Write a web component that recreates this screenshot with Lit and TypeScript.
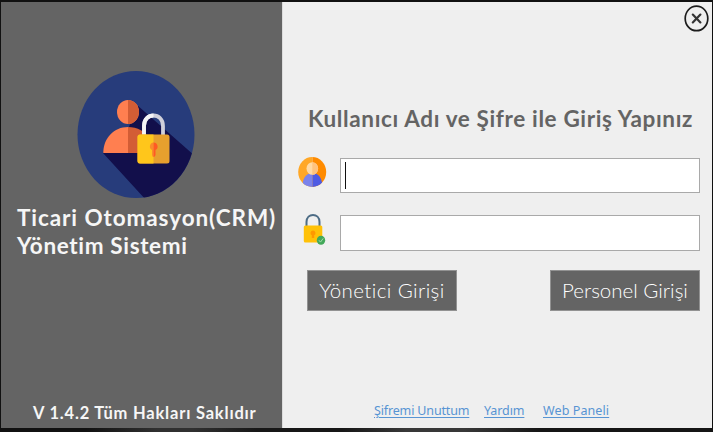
import { LitElement, html, css } from "lit";
import { customElement } from "lit/decorators.js";

@customElement("app-root")
export class AppRoot extends LitElement {
  static styles = css`
    :host {
      display: block;
      box-sizing: border-box;
      width: 713px;
      height: 432px;
      padding: 2px 1px 4px;
      overflow: hidden;
      background: linear-gradient(90deg, #111 0 12%, #303030 22% 27%, #171717 36% 48%, #383838 57% 65%, #151515 76%) 0 428px / 713px 4px no-repeat, #111;
      font-family: Lato, "Century Gothic", sans-serif;
    }
    * { box-sizing: border-box; }
    svg { display: block; overflow: visible; }
    .window { display: flex; width: 711px; height: 426px; background: #efefef; }
    .side {
      width: 281px;
      display: flex;
      flex-direction: column;
      background: #646464;
      color: #f6f6f6;
      font-weight: 700;
      white-space: nowrap;
    }
    .logo { margin: 68px 0 0 76px; }
    .title { margin: 4px 0 0 16px; font-size: 22.5px; line-height: 28px; }
    .t1 { letter-spacing: 0.92px; }
    .t2 { letter-spacing: 0.65px; }
    .version { margin: auto 0 5px 32px; font-size: 16.5px; line-height: 20px; letter-spacing: 0.8px; }
    .main { width: 430px; display: flex; flex-direction: column; border-left: 1px solid #dcdcdc; white-space: nowrap; }
    .close { margin: 3px 1px 0 auto; }
    .heading {
      margin: 73px 0 0 25px;
      font-size: 22.5px;
      line-height: 28px;
      font-weight: 700;
      color: #646464;
      letter-spacing: 0.64px;
    }
    .row { display: flex; align-items: center; padding-left: 15px; gap: 13px; }
    .user { margin-top: 25px; height: 35px; }
    .pass { margin-top: 22px; height: 36px; }
    .icon { width: 29px; }
    .user .icon { margin-top: -5px; }
    .field { width: 360px; height: 100%; background: #fff; border: 1px solid #a9a9a9; padding: 3px 4px; }
    .caret { width: 1px; height: 27px; background: #111; }
    .buttons { display: flex; justify-content: space-between; margin: 19px 12px 0 24px; }
    .button {
      width: 150px;
      height: 41px;
      border: 1px solid #929292;
      background: #646464;
      color: #fff;
      font-size: 20.5px;
      font-weight: 300;
      line-height: 39px;
      text-align: center;
    }
    .b1 { letter-spacing: 0.4px; }
    .b2 { letter-spacing: 0; }
    .links {
      display: flex;
      margin: auto 0 8px 91px;
      font-family: "Noto Sans", sans-serif;
      font-size: 12.5px;
      line-height: 18px;
      color: #5794d3;
    }
    .link { text-decoration: underline; text-underline-offset: 2px; }
    .l1 { width: 110px; letter-spacing: -0.15px; }
    .l2 { width: 59px; letter-spacing: -0.1px; }
    .l3 { letter-spacing: 0.1px; }
  `;

  render() {
    return html`
      <div class="window">
        <div class="side">
          <svg class="logo" width="119" height="130" viewBox="0 0 119 130">
            <defs><clipPath id="disc"><ellipse cx="59" cy="64.5" rx="58.5" ry="63.5" /></clipPath></defs>
            <g clip-path="url(#disc)">
              <rect width="119" height="130" fill="#273c7b" />
              <path d="M60 35 119 87V130H69L26 83 52 57Z" fill="#120f4b" />
            </g>
            <ellipse cx="51" cy="42" rx="11" ry="12" fill="#ff7f50" />
            <path d="M51 30a11 12 0 0 1 0 24Z" fill="#d35d35" />
            <path d="M26.300 83C26.300 68 37 57 51 57V83Z" fill="#ff7f50" />
            <path d="M51 57C60 57 69 61 73 70V83H51Z" fill="#d35d35" />
            <path d="M67 66V56C67 42 86 42 86 56V66" fill="none" stroke="#d0d0da" stroke-width="3.800" />
            <path d="M67 66V56C67 49 71.500 45.500 76.500 45.500" fill="none" stroke="#f4f4f6" stroke-width="3.800" />
            <rect x="60.500" y="64.500" width="32" height="29" rx="2.500" fill="#e6a02e" />
            <path d="M76.500 64.500H63a2.500 2.500 0 0 0-2.500 2.500V91a2.500 2.500 0 0 0 2.500 2.500H76.500Z" fill="#ffc61b" />
            <path d="M76.500 72.500a4 4 0 0 0-1.500 7.500V85q.3 2 1.500 2Z" fill="#fa8b2b" />
            <path d="M76.500 72.500a4 4 0 0 1 2 7.500V85q-.5 2-2 2Z" fill="#ff5a24" />
          </svg>
          <div class="title">
            <div class="t1">Ticari Otomasyon(CRM)</div>
            <div class="t2">Yönetim Sistemi</div>
          </div>
          <div class="version">V 1.4.2 Tüm Hakları Saklıdır</div>
        </div>
        <div class="main">
          <svg class="close" width="27" height="27" viewBox="0 0 27 27">
            <ellipse cx="12.500" cy="13.400" rx="11.300" ry="12.300" fill="none" stroke="#1c1c1c" stroke-width="1.700" />
            <path d="M8.800 9.600 16.400 17.400M16.400 9.600 8.800 17.400" fill="none" stroke="#333" stroke-width="2.200" stroke-linecap="round" />
          </svg>
          <div class="heading">Kullanıcı Adı ve Şifre ile Giriş Yapınız</div>
          <div class="row user">
            <svg class="icon" width="29" height="32" viewBox="0 0 29 32">
              <defs><clipPath id="face"><ellipse cx="14.200" cy="15" rx="14" ry="15" /></clipPath></defs>
              <g clip-path="url(#face)">
                <rect width="14.500" height="32" fill="#ffa726" />
                <rect x="14.500" width="15" height="32" fill="#ff8b00" />
                <path d="M4.500 28C5 20 9 16 14.500 16V32H4Z" fill="#7b83eb" />
                <path d="M14.500 16C20 16 23.500 20 24.500 28V32H14.500Z" fill="#4f5be3" />
              </g>
              <ellipse cx="14.300" cy="11.500" rx="5.800" ry="6.300" fill="#ffd9a3" />
              <path d="M14.300 5.200a5.800 6.300 0 0 1 0 12.600Z" fill="#ffc27d" />
            </svg>
            <div class="field"><div class="caret"></div></div>
          </div>
          <div class="row pass">
            <svg class="icon" width="29" height="36" viewBox="-0.5 0 29 36">
              <path d="M8 11.500V7C8 -2.500 21 -2.500 21 7V11.500" fill="none" stroke="#4d6c85" stroke-width="2" />
              <rect x="5.300" y="10.500" width="18.500" height="17" rx="1.500" fill="#ffc107" />
              <path d="M14.500 15.500a2.500 2.500 0 0 0-1.200 4.700V23h2.400V20.200A2.500 2.500 0 0 0 14.500 15.500Z" fill="#ff9800" />
              <ellipse cx="22.500" cy="25.300" rx="4.200" ry="4.500" fill="#43a95a" />
              <path d="M20.500 25.300 22 27.100 24.700 23.400" fill="none" stroke="#a4dbad" stroke-width="1" />
            </svg>
            <div class="field"></div>
          </div>
          <div class="buttons">
            <div class="button b1">Yönetici Girişi</div>
            <div class="button b2">Personel Girişi</div>
          </div>
          <div class="links">
            <div class="l1"><span class="link">Şifremi Unuttum</span></div>
            <div class="l2"><span class="link">Yardım</span></div>
            <div class="l3"><span class="link">Web Paneli</span></div>
          </div>
        </div>
      </div>
    `;
  }
}
